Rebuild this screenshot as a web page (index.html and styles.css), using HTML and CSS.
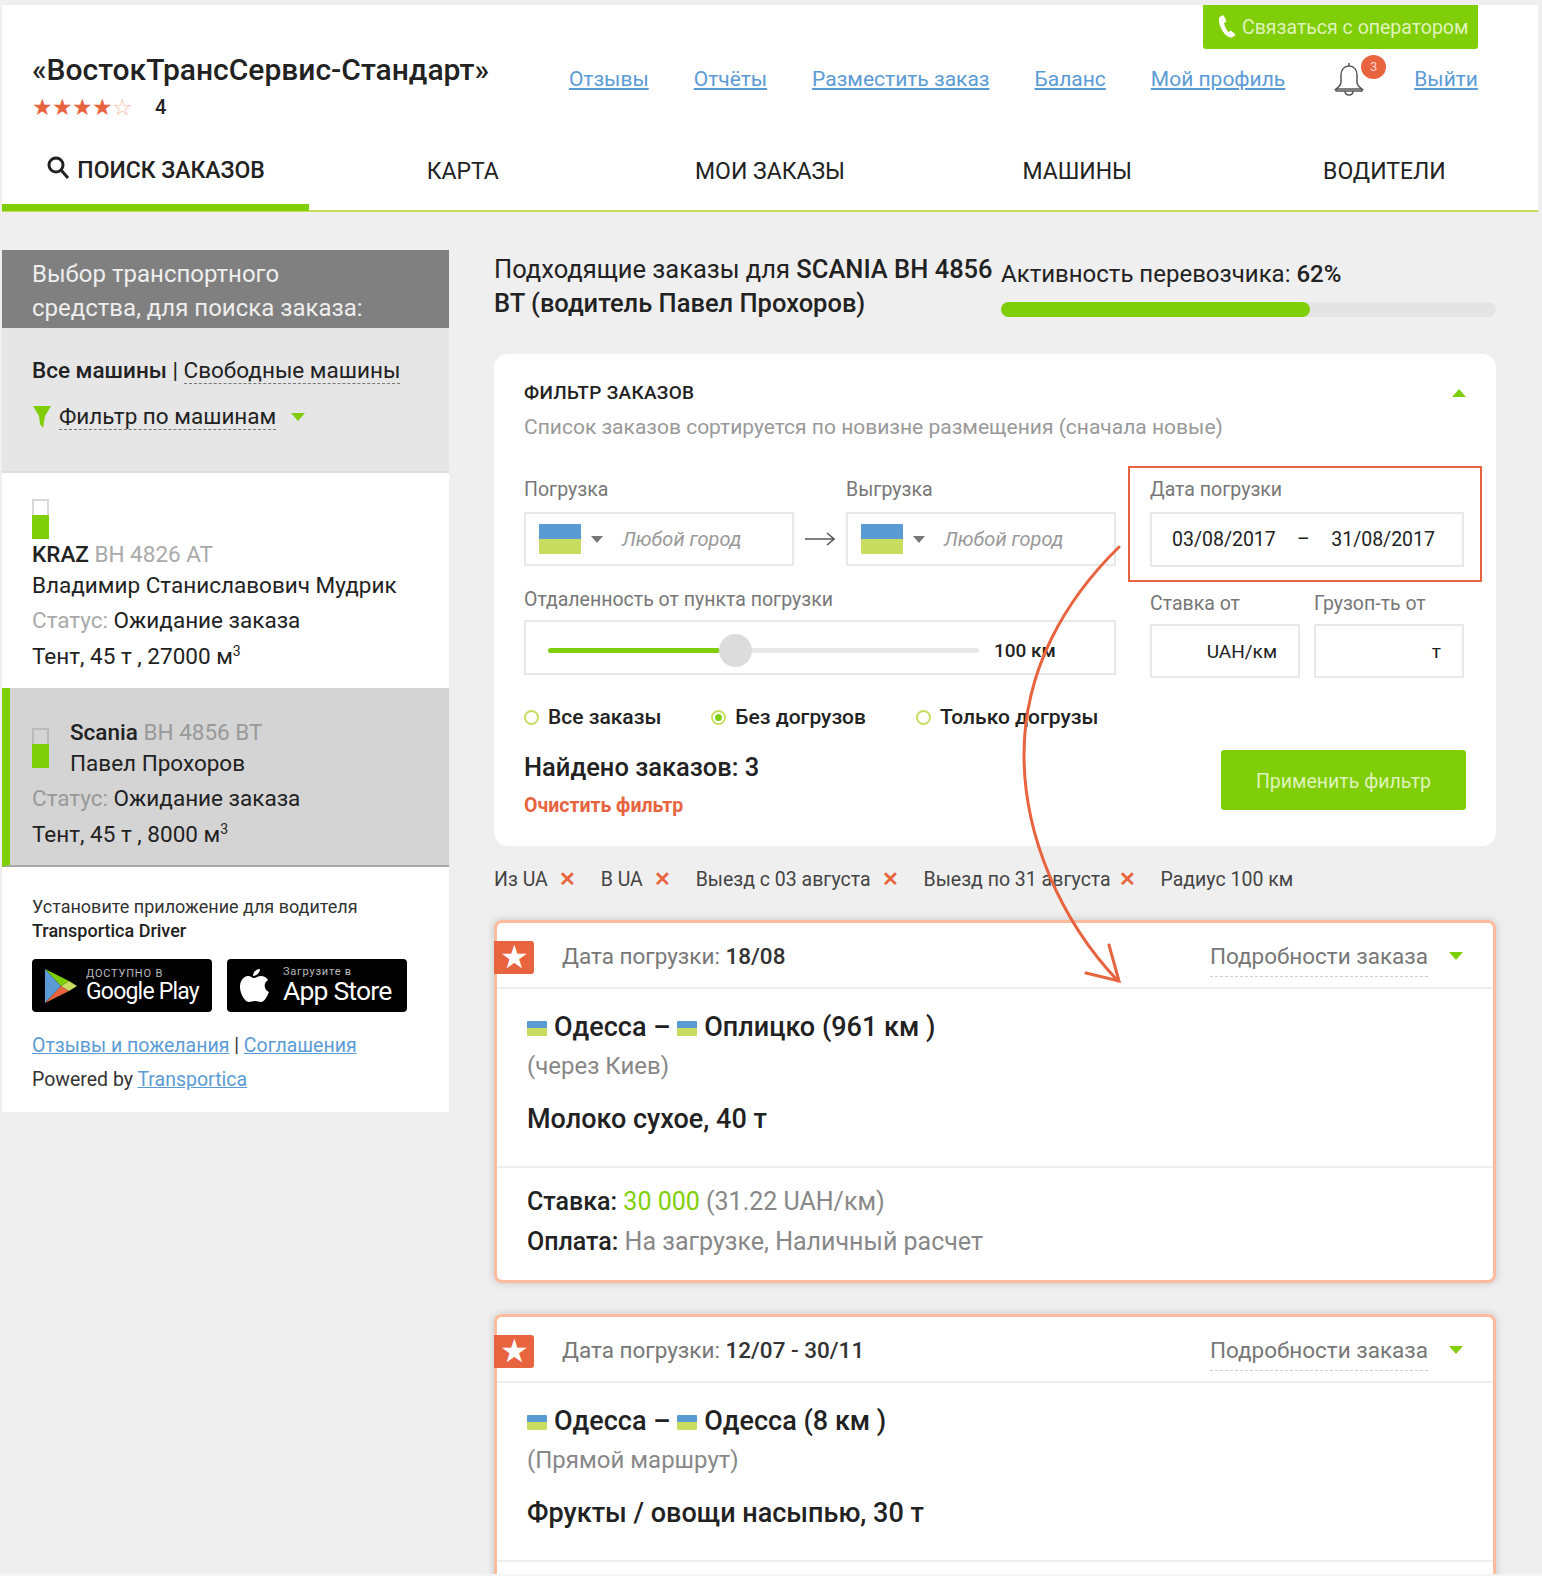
FILE: index.html
```html
<!DOCTYPE html>
<html lang="ru">
  <head>
    <meta charset="UTF-8" />
    <title>Поиск заказов</title>
    <link rel="stylesheet" href="styles.css">
  </head>
  <body>
    <div class="page">
      <header class="top">
        <div class="top-row">
          <div class="brand">
            <h1>«ВостокТрансСервис-Стандарт»</h1>
            <div class="rating">
              <span class="stars">★★★★<i>☆</i></span>
              <b>4</b>
            </div>
          </div>
          <div class="top-right">
            <a class="call-btn" href="#">
              <svg width="20" height="24" viewBox="0 0 20 24"><path d="M3 1c-2 1-2.500 3-2 6 1 5 4 11 8 14 2 1.500 4 2 6 1l2-1.500c.5-.5.5-1 0-1.500l-3.500-3c-.5-.4-1-.4-1.500 0l-1.500 1.200C8.500 15 6.500 11 6 8l1.800-1c.5-.3.6-.8.4-1.300L6 1c-.3-.6-.8-.7-1.300-.6z" fill="#fff"/></svg>
              Связаться с оператором
            </a>
            <nav class="links">
              <a href="#">Отзывы</a>
              <a href="#">Отчёты</a>
              <a href="#">Разместить заказ</a>
              <a href="#">Баланс</a>
              <a href="#">Мой профиль</a>
              <span class="bell">
                <svg width="32" height="36" viewBox="0 0 32 36" fill="none" stroke="#555" stroke-width="1.500"><path d="M16 2v3M16 5c-5 0-8 4-8 9v7c0 3-2 5-5 7h26c-3-2-5-4-5-7v-7c0-5-3-9-8-9z"/><path d="M3 28v2h26v-2M12 30c0 3 2 4 4 4s4-1 4-4"/></svg>
                <em>3</em>
              </span>
              <a href="#">Выйти</a>
            </nav>
          </div>
        </div>
        <div class="tabs">
          <a class="tab active" href="#">
            <svg width="24" height="24" viewBox="0 0 24 24" fill="none" stroke="#222" stroke-width="3"><circle cx="10" cy="9" r="7"/><path d="M15 14l7 8"/></svg>
            ПОИСК ЗАКАЗОВ
          </a>
          <a class="tab" href="#">КАРТА</a>
          <a class="tab" href="#">МОИ ЗАКАЗЫ</a>
          <a class="tab" href="#">МАШИНЫ</a>
          <a class="tab" href="#">ВОДИТЕЛИ</a>
        </div>
      </header>

      <div class="layout">
        <aside class="side">
          <div class="side-title">Выбор транспортного<br />средства, для поиска заказа:</div>
          <div class="side-filter">
            <p class="side-switch"><b>Все машины</b> | <span class="dashed">Свободные машины</span></p>
            <p class="side-funnel">
              <svg width="20" height="24" viewBox="0 0 20 24"><path d="M1 1h18l-6 10-2 12-3-4-1-8z" fill="#7fce08"/></svg>
              <span class="dashed">Фильтр по машинам</span>
              <i class="caret"></i>
            </p>
          </div>
          <div class="truck">
            <div class="battery"><span></span></div>
            <p><b>KRAZ</b> <span class="plate">BH 4826 AT</span></p>
            <p>Владимир Станиславович Мудрик</p>
            <p class="status"><span>Статус:</span> Ожидание заказа</p>
            <p class="spec">Тент, 45 т , 27000 м<sup>3</sup></p>
          </div>
          <div class="truck selected">
            <div class="truck-head">
              <div class="battery"><span></span></div>
              <div>
                <p><b>Scania</b> <span class="plate">BH 4856 BT</span></p>
                <p>Павел Прохоров</p>
              </div>
            </div>
            <p class="status"><span>Статус:</span> Ожидание заказа</p>
            <p class="spec">Тент, 45 т , 8000 м<sup>3</sup></p>
          </div>
          <div class="side-foot">
            <p class="install">Установите приложение для водителя<br /><b>Transportica Driver</b></p>
            <div class="stores">
              <a class="store play" href="#">
                <svg width="34" height="36" viewBox="0 0 34 36"><path d="M1 1l16 17L1 35z" fill="#5b9bd5"/><path d="M1 1l24 12-8 5z" fill="#7fce08"/><path d="M1 35l24-12-8-5z" fill="#e8643f"/><path d="M25 13l8 5-8 5-8-5z" fill="#c8dc60"/></svg>
                <span class="store-text"><small class="caps">ДОСТУПНО В</small><strong>Google Play</strong></span>
              </a>
              <a class="store app" href="#">
                <svg class="apple" width="30" height="36" viewBox="0 0 30 36"><path d="M21 1c0 3-3 7-7 7 0-4 3-7 7-7zM15 10c2 0 4-2 7-2 3 0 5 1 7 4-5 3-4 10 1 12-2 5-5 10-8 10-2 0-3-1-6-1s-4 1-6 1C6 34 1 26 1 19 1 12 5 8 9 8c3 0 4 2 6 2z" fill="#fff"/></svg>
                <span class="store-text"><small>Загрузите в</small><strong>App Store</strong></span>
              </a>
            </div>
            <p class="foot-links"><a href="#">Отзывы и пожелания</a> | <a href="#">Соглашения</a></p>
            <p class="foot-links">Powered by <a href="#">Transportica</a></p>
          </div>
        </aside>

        <main class="main">
          <div class="summary">
            <h2>
              <span>Подходящие заказы для <b>SCANIA BH 4856</b></span>
              <b>BT (водитель Павел Прохоров)</b>
            </h2>
            <div class="activity">
              <div>Активность перевозчика: <b>62%</b></div>
              <div class="bar"><span class="bar-fill"></span></div>
            </div>
          </div>

          <section class="filter">
            <div class="filter-head">
              <h3>ФИЛЬТР ЗАКАЗОВ</h3>
              <i class="caret up"></i>
            </div>
            <p class="filter-note">Список заказов сортируется по новизне размещения (сначала новые)</p>
            <div class="filter-grid">
              <div class="filter-left">
                <div class="places">
                  <div class="place">
                    <label>Погрузка</label>
                    <div class="box city">
                      <span class="flag big"></span><i class="caret gray"></i><em>Любой город</em>
                    </div>
                  </div>
                  <svg class="route-arrow" width="30" height="14" viewBox="0 0 30 14" fill="none" stroke="#555" stroke-width="1.500"><path d="M0 7h28M22 1l7 6-7 6"/></svg>
                  <div class="place">
                    <label>Выгрузка</label>
                    <div class="box city">
                      <span class="flag big"></span><i class="caret gray"></i><em>Любой город</em>
                    </div>
                  </div>
                </div>
                <label class="range-label">Отдаленность от пункта погрузки</label>
                <div class="box range">
                  <div class="track"><span class="track-fill"></span><span class="thumb"></span></div>
                  <b>100 км</b>
                </div>
                <div class="radios">
                  <span class="radio"><i></i>Все заказы</span>
                  <span class="radio on"><i></i>Без догрузов</span>
                  <span class="radio"><i></i>Только догрузы</span>
                </div>
              </div>
              <div class="filter-right">
                <div class="date-mark">
                  <label>Дата погрузки</label>
                  <div class="box dates"><span>03/08/2017</span><span>–</span><span>31/08/2017</span></div>
                </div>
                <div class="small-fields">
                  <div>
                    <label>Ставка от</label>
                    <div class="box small">UAH/км</div>
                  </div>
                  <div>
                    <label>Грузоп-ть от</label>
                    <div class="box small">т</div>
                  </div>
                </div>
              </div>
            </div>
            <div class="filter-foot">
              <div>
                <div class="found">Найдено заказов: 3</div>
                <a class="clear" href="#">Очистить фильтр</a>
              </div>
              <button class="apply">Применить фильтр</button>
            </div>
          </section>

          <div class="chips">
            <span>Из UA <i>✕</i></span>
            <span>В UA <i>✕</i></span>
            <span>Выезд с 03 августа <i>✕</i></span>
            <span>Выезд по 31 августа <i class="tight">✕</i></span>
            <span>Радиус 100 км</span>
          </div>

          <article class="order">
            <div class="order-head">
              <span class="fav">★</span>
              <span class="order-date">Дата погрузки: <b>18/08</b></span>
              <span class="order-more"><span class="dashed">Подробности заказа</span><i class="caret"></i></span>
            </div>
            <div class="order-body">
              <div class="route"><span class="flag"></span>Одесса – <span class="flag"></span>Оплицко (961 км )</div>
              <div class="via">(через Киев)</div>
              <div class="cargo">Молоко сухое, 40 т</div>
            </div>
            <div class="order-pay">
              <p><span class="dark">Ставка:</span> <span class="green">30 000</span> (31.22 UAH/км)</p>
              <p><span class="dark">Оплата:</span> На загрузке, Наличный расчет</p>
            </div>
          </article>

          <article class="order">
            <div class="order-head">
              <span class="fav">★</span>
              <span class="order-date">Дата погрузки: <b>12/07 - 30/11</b></span>
              <span class="order-more"><span class="dashed">Подробности заказа</span><i class="caret"></i></span>
            </div>
            <div class="order-body">
              <div class="route"><span class="flag"></span>Одесса – <span class="flag"></span>Одесса (8 км )</div>
              <div class="via">(Прямой маршрут)</div>
              <div class="cargo">Фрукты / овощи насыпью, 30 т</div>
            </div>
            <div class="order-pay"></div>
          </article>
        </main>
      </div>

      <!-- hand-drawn annotation on top of the screenshot -->
      <svg class="note-arrow" width="1542" height="1576" viewBox="0 0 1542 1576" fill="none" stroke="#e8643f" stroke-width="3" stroke-linecap="round">
        <path d="M1119 547C1065 600 1024 670 1024 755C1024 835 1060 920 1118 981"/>
        <path d="M1109 945L1119 981L1086 973"/>
      </svg>
    </div>
  </body>
</html>
```

FILE: styles.css
```css
* {
  box-sizing: border-box;
}
html,
body {
  margin: 0;
  height: 1576px;
  overflow: hidden;
}
body {
  background-color: #f5f5f5;
  font-family: Roboto, "Noto Sans", sans-serif;
  color: #222;
}
p,
h1,
h2,
h3 {
  margin: 0;
}
a {
  color: #5b9bd5;
}
.page {
  position: relative;
  height: 1574px;
  overflow: hidden;
  padding: 5px 4px 0 2px;
  background-color: #efefef;
}
.dashed {
  border-bottom: 1px dashed #777;
}

/* header */
.top {
  background-color: #fff;
  height: 207px;
  border-bottom: 2px solid #c8dc60;
}
.top-row {
  display: flex;
  justify-content: space-between;
  height: 132px;
  padding: 0 60px 0 30px;
}
.brand {
  padding-top: 47px;
}
.brand h1 {
  font-size: 30px;
  font-weight: 500;
  line-height: 36px;
}
.rating {
  display: flex;
  align-items: center;
  margin-top: 5px;
  line-height: 28px;
}
.stars {
  width: 100px;
  color: #e8643f;
  font-size: 23px;
  letter-spacing: -0.6px;
  font-family: "DejaVu Sans", sans-serif;
}
.stars i {
  font-style: normal;
  color: #f8b79f;
}
.rating b {
  margin-left: 23px;
  font-size: 20px;
  font-weight: 500;
}
.top-right {
  display: flex;
  flex-direction: column;
  align-items: flex-end;
}
.call-btn {
  display: flex;
  align-items: center;
  gap: 4px;
  width: 275px;
  height: 44px;
  padding-left: 15px;
  background-color: #7fce08;
  border-radius: 0 0 3px 3px;
  color: #dff3b8;
  font-size: 19.500px;
  text-decoration: none;
}
.links {
  display: flex;
  align-items: center;
  gap: 45px;
  margin-top: 5px;
  height: 50px;
  font-size: 21px;
}
.bell {
  position: relative;
  display: block;
  height: 36px;
  margin: 0 4px 0 3px;
}
.bell em {
  position: absolute;
  top: -6px;
  left: 28px;
  width: 25px;
  height: 24px;
  border-radius: 50%;
  background-color: #e8643f;
  color: #fbd2c3;
  font-size: 13px;
  font-style: normal;
  line-height: 24px;
  text-align: center;
}
.tabs {
  display: grid;
  grid-template-columns: repeat(5, 1fr);
  height: 74px;
}
.tab {
  display: flex;
  align-items: center;
  justify-content: center;
  gap: 7px;
  height: 74px;
  padding-bottom: 6px;
  color: #222;
  font-size: 23px;
  text-decoration: none;
}
.tab.active {
  font-weight: 500;
  border-bottom: 7px solid #7fce08;
  padding-bottom: 0;
}
.tab.active svg {
  margin-top: -6px;
}

/* page columns */
.layout {
  display: flex;
  padding-top: 38px;
}
.side {
  width: 447px;
  flex-shrink: 0;
}
.main {
  width: 1002px;
  margin-left: 45px;
}

/* sidebar */
.side-title {
  height: 78px;
  padding: 7px 30px 0;
  background-color: #808080;
  color: #eee;
  font-size: 24px;
  line-height: 34px;
}
.side-filter {
  height: 145px;
  padding: 29px 30px 0;
  background-color: #e6e6e6;
  border-bottom: 2px solid #dcdcdc;
  font-size: 22.500px;
}
.side-switch b {
  font-weight: 500;
}
.side-funnel {
  display: flex;
  align-items: center;
  gap: 7px;
  margin-top: 20px;
}
.caret {
  display: inline-block;
  width: 0;
  height: 0;
  border-left: 7px solid transparent;
  border-right: 7px solid transparent;
  border-top: 8px solid #7fce08;
}
.caret.up {
  border-top: 0;
  border-bottom: 8px solid #7fce08;
}
.caret.gray {
  border-left-width: 6px;
  border-right-width: 6px;
  border-top: 7px solid #777;
}
.side-funnel .caret {
  margin-left: 8px;
}
.truck {
  padding: 26px 30px 0;
  background-color: #fff;
  height: 215px;
  font-size: 22.500px;
  line-height: 31px;
}
.truck b {
  font-weight: 500;
}
.plate,
.status span {
  color: #aaa;
}
.battery {
  width: 17px;
  height: 40px;
  border: 2px solid #d8d8d8;
  position: relative;
}
.battery span {
  position: absolute;
  left: -2px;
  right: -2px;
  bottom: -2px;
  height: 24px;
  background-color: #7fce08;
}
.status {
  margin-top: 4px;
}
.spec {
  margin-top: 5px;
}
.spec sup {
  font-size: 14px;
  line-height: 0;
}
.truck.selected {
  height: 179px;
  padding: 29px 30px 0 22px;
  background-color: #d4d4d4;
  border-left: 8px solid #7fce08;
  border-bottom: 2px solid #aaa;
}
.truck-head {
  display: flex;
  align-items: center;
  gap: 21px;
}
.selected .battery {
  border-color: #bbb;
}
.selected .plate,
.selected .status span {
  color: #999;
}
.side-foot {
  height: 245px;
  padding: 28px 30px 0;
  background-color: #fff;
  font-size: 18px;
  line-height: 24px;
  color: #333;
}
.install b {
  font-weight: 500;
  color: #222;
}
.stores {
  display: flex;
  gap: 15px;
  margin: 16px 0 17px;
}
.store {
  display: flex;
  align-items: center;
  gap: 8px;
  width: 180px;
  height: 53px;
  padding-left: 12px;
  background-color: #000;
  border-radius: 4px;
  color: #fff;
  text-decoration: none;
}
.store-text {
  display: flex;
  flex-direction: column;
  line-height: 1;
}
.store-text small {
  font-size: 11px;
  letter-spacing: 0.8px;
  color: #bbb;
  margin-bottom: 1px;
}
.store-text strong {
  font-weight: 400;
  letter-spacing: -0.8px;
}
.play strong {
  font-size: 23px;
}
.app strong {
  font-size: 26.500px;
}
.store .apple {
  margin-right: 6px;
}
.foot-links {
  font-size: 19.500px;
  line-height: 34px;
}

/* summary */
.summary {
  display: flex;
  height: 104px;
  padding-top: 2px;
}
.summary h2 {
  display: flex;
  flex-direction: column;
  width: 507px;
  font-size: 25.500px;
  font-weight: 400;
  line-height: 34px;
}
.summary h2 b,
.activity b {
  font-weight: 500;
}
.activity {
  flex: 1;
  padding-top: 7px;
  font-size: 24px;
  line-height: 30px;
}
.bar {
  height: 15px;
  margin-top: 13px;
  background-color: #e4e4e4;
  border-radius: 8px;
}
.bar-fill {
  display: block;
  width: 62.500%;
  height: 100%;
  background-color: #7fce08;
  border-radius: 8px;
}

/* filter card */
.filter {
  height: 492px;
  padding: 26px 30px 0;
  background-color: #fff;
  border-radius: 14px;
}
.filter-head {
  display: flex;
  align-items: center;
  justify-content: space-between;
}
.filter-head h3 {
  font-size: 19px;
  font-weight: 500;
  line-height: 26px;
  letter-spacing: 0.3px;
}
.filter-note {
  margin-top: 8px;
  color: #999;
  font-size: 21px;
  line-height: 26px;
}
.filter label {
  display: block;
  color: #777;
  font-size: 19.500px;
  line-height: 24px;
}
.filter-grid {
  display: flex;
  gap: 34px;
  margin-top: 38px;
}
.filter-left {
  width: 592px;
}
.filter-right {
  width: 314px;
}
.places {
  display: flex;
  align-items: flex-end;
  justify-content: space-between;
}
.place label {
  margin-bottom: 10px;
}
.route-arrow {
  margin-bottom: 20px;
}
.box {
  border: 2px solid #e8e8e8;
  display: flex;
  align-items: center;
}
.city {
  width: 270px;
  height: 54px;
  padding-left: 13px;
  gap: 10px;
}
.city em {
  margin-left: 9px;
  color: #999;
  font-size: 20px;
}
.flag {
  display: inline-block;
  width: 20px;
  height: 15px;
  margin-right: 7px;
  background: linear-gradient(#5b9bd5 50%, #c8dc60 50%);
  border-radius: 1px;
}
.flag.big {
  width: 42px;
  height: 30px;
  margin: 0;
}
.filter .range-label {
  margin-top: 22px;
}
.range {
  height: 55px;
  margin-top: 8px;
  padding: 5px 22px 0;
  gap: 15px;
}
.range b {
  font-size: 19px;
  font-weight: 500;
}
.track {
  position: relative;
  width: 431px;
  height: 5px;
  background-color: #e8e8e8;
  border-radius: 3px;
}
.track-fill {
  display: block;
  width: 172px;
  height: 5px;
  background-color: #7fce08;
  border-radius: 3px;
}
.thumb {
  position: absolute;
  top: -14px;
  left: 171px;
  width: 33px;
  height: 33px;
  border-radius: 50%;
  background-color: #dcdcdc;
}
.radios {
  display: flex;
  gap: 50px;
  margin-top: 29px;
  font-size: 21px;
  font-weight: 500;
  line-height: 26px;
}
.radio {
  display: flex;
  align-items: center;
  gap: 9px;
}
.radio i {
  width: 15px;
  height: 15px;
  border: 2px solid #c8dc60;
  border-radius: 50%;
}
.radio.on i {
  border-color: #c8dc60;
  background-color: #7fce08;
  background-clip: content-box;
  padding: 2px;
}
.date-mark {
  margin: -12px -18px 0 -22px;
  padding: 10px 16px 12px 20px;
  border: 2px solid #e8643f;
  height: 116px;
}
.date-mark label {
  margin-bottom: 10px;
}
.dates {
  height: 55px;
  justify-content: space-between;
  padding: 0 27px 0 20px;
  font-size: 19.500px;
}
.small-fields {
  display: flex;
  justify-content: space-between;
  margin-top: 9px;
}
.small-fields label {
  margin-bottom: 8px;
  padding-top: 1px;
}
.small {
  width: 150px;
  height: 54px;
  justify-content: flex-end;
  padding-right: 21px;
  font-size: 19px;
}
.filter-foot {
  display: flex;
  justify-content: space-between;
  margin-top: 20px;
}
.found {
  font-size: 25.500px;
  font-weight: 500;
  line-height: 32px;
  margin-top: 1px;
}
.clear {
  display: block;
  margin-top: 11px;
  color: #e8643f;
  font-size: 19.500px;
  font-weight: 700;
  line-height: 24px;
  text-decoration: none;
}
.apply {
  width: 245px;
  height: 60px;
  padding-top: 3px;
  border: 0;
  border-radius: 3px;
  background-color: #7fce08;
  color: #dff3b8;
  font-family: inherit;
  font-size: 19.500px;
}

/* chips */
.chips {
  display: flex;
  gap: 25px;
  height: 74px;
  padding-top: 22px;
  font-size: 19.500px;
  line-height: 24px;
  color: #444;
}
.chips i {
  margin-left: 6px;
  color: #e8643f;
  font-style: normal;
  font-weight: 700;
}
.chips i.tight {
  margin-left: 3px;
}

/* order cards */
.order {
  margin-bottom: 31px;
  background-color: #fff;
  border: 3px solid #ffbb9e;
  border-radius: 8px;
  box-shadow: 0 0 8px rgba(0, 0, 0, 0.18);
}
.order-head {
  display: flex;
  align-items: center;
  height: 66px;
  padding-top: 2px;
  border-bottom: 2px solid #eee;
  position: relative;
  font-size: 22.500px;
  color: #777;
}
.fav {
  width: 40px;
  height: 33px;
  margin: 2px 28px 0 -3px;
  background-color: #e8643f;
  border-radius: 0 3px 3px 0;
  color: #fff;
  font-size: 32px;
  line-height: 33px;
  text-align: center;
}
.order-date b {
  font-weight: 500;
  color: #333;
}
.order-more {
  display: flex;
  align-items: center;
  gap: 21px;
  margin-left: auto;
  padding-right: 30px;
}
.order-more .dashed {
  border-bottom-color: #ccc;
  line-height: 40px;
}
.order-body {
  height: 177px;
  padding: 19px 30px 0;
}
.route {
  font-size: 27px;
  font-weight: 500;
  line-height: 38px;
}
.via {
  margin-top: 1px;
  color: #888;
  font-size: 24px;
  line-height: 38px;
}
.cargo {
  margin-top: 15px;
  font-size: 27px;
  font-weight: 500;
  line-height: 38px;
}
.order-pay {
  height: 114px;
  padding: 14px 30px 0;
  border-top: 2px solid #eee;
  color: #888;
  font-size: 25px;
  line-height: 40px;
}
.dark {
  color: #222;
  font-weight: 500;
}
.green {
  color: #7fce08;
}
.note-arrow {
  position: absolute;
  top: 0;
  left: 0;
  pointer-events: none;
}
```
